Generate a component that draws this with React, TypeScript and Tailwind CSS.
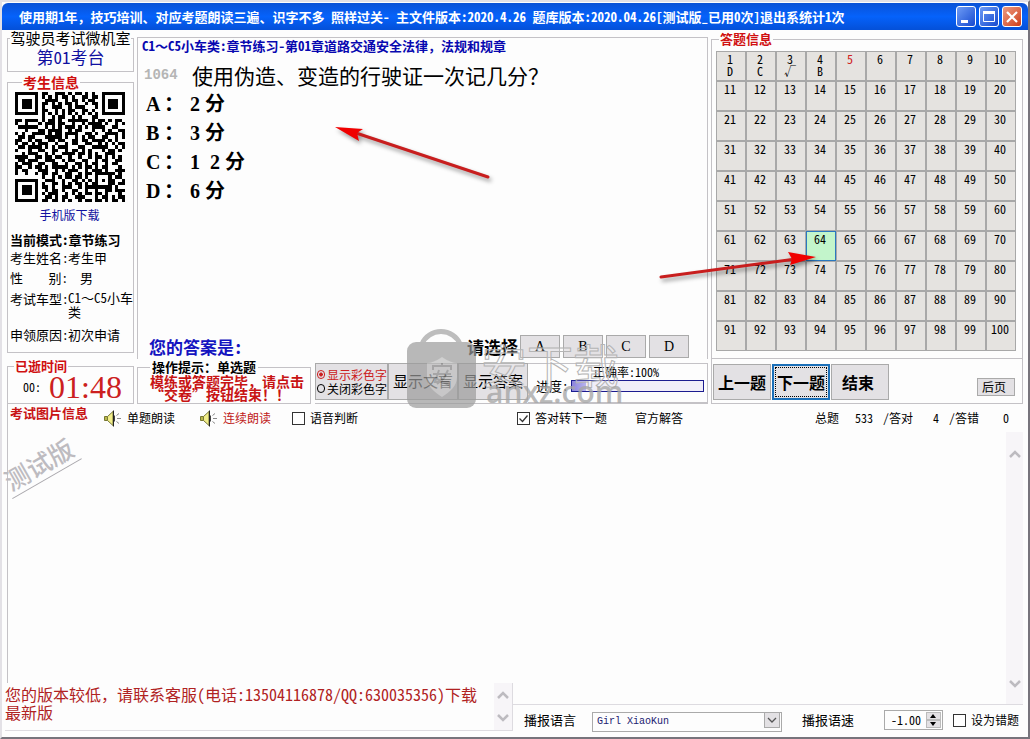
import React, { useState } from 'react';

const qrRows = [
    '#######.##..###.#.##.#.#..#######',
    '#.....#.#.#.#.##.#..##.##.#.....#',
    '#.###.#..####..#.##.#.##..#.###.#',
    '#.###.#.##.#.#.##.#..#.##.#.###.#',
    '#.###.#.#..###..#.###...#.#.###.#',
    '#.....#.##..#.#.##..##.#..#.....#',
    '#######.#.#.#.#.#.#.#.#.#.#######',
    '........#..#.##..#.#...##........',
    '##.####.#.##.#..######.#.##.#.##.',
    '#..#...#.###.##..#..#.####.#..#.#',
    '.######..#.#.#.###.#.#.####..##..',
    '...#...##.####..#.##...#..#.#..##',
    '#.#..####.#.##.####..##.#..####.#',
    '.##.##...#####.#..#.#.##..##..#.#',
    '##..#.##..##.##..##.##.####.#.#..',
    '#.##.#.###..#..#.##..##..#.#.#.##',
    '.##.####.#.#.###...##..#####..#.#',
    '#...#..##..##..#.##.#.#...#.##.#.',
    '..#.###..#.#..####.##.#.#..###...',
    '####..##.##.##..#..#..#.##.#.#.#.',
    '.##.###..###..#.##..##..#.##..##.',
    '#.###..##..##..#..##.#.##..#.##..',
    '##..#.##.#.#####.#.#.##.#.##...#.',
    '#.##...###..#.#.###..#.###.#..###',
    '#..#..#.##.##..##..#.##.######.#.',
    '........#..#.#.##.##.#..#...#.##.',
    '#######..###..#..##.#.#.#.#.##..#',
    '#.....#.#..##.#.#.##.#.##...##.##',
    '#.###.#.##.#..###..#.########.#..',
    '#.###.#..#.##.#..##..#..#..##.###',
    '#.###.#.#.###..#.#.#.##.##.#...#.',
    '#.....#..##.#.##..###...#.##.#.##',
    '#######.##.##.#.#..#.##.##.#.##.#',
];

const answers: Record<number, string> = { 1: 'D', 2: 'C', 3: '√', 4: 'B' };

const options = [
    { key: 'A', text: '2 分' },
    { key: 'B', text: '3 分' },
    { key: 'C', text: '1\u00a0\u00a02 分' },
    { key: 'D', text: '6 分' },
];

function QrCode() {
    return (
        <svg viewBox="0 0 33 33" className="h-[110px] w-[110px]" shapeRendering="crispEdges" role="img" aria-label="手机版下载">
            {qrRows.map((row, y) =>
                row.split('').map((c, x) => (c === '#' ? <rect key={x + '-' + y} x={x} y={y} width="1" height="1" fill="#000" /> : null))
            )}
        </svg>
    );
}

function Speaker() {
    return (
        <svg viewBox="0 0 17 17" className="h-[17px] w-[17px]" aria-hidden="true">
            <path d="M0.5 6.5h3v4h-3z" fill="#b8b84a" stroke="#777733" />
            <path d="M3.5 6.500L9 1.500v14L3.500 10.500z" fill="#f2ee8a" stroke="#77773a" />
            <path d="M9.500 0.500v16" stroke="#222" />
            <path d="M10.500 5.500v6" stroke="#444" />
            <path d="M12.500 5.500l2.500-2M13 8.500h4M12.500 11.500l2.500 2" stroke="#888" />
        </svg>
    );
}

function Chevron({ up }: { up?: boolean }) {
    return (
        <svg viewBox="0 0 12 8" className="h-2 w-3" fill="none" aria-hidden="true">
            <path d={up ? 'M1 7l5-5 5 5' : 'M1 1l5 5 5-5'} stroke="#bdbbc0" strokeWidth="2.5" />
        </svg>
    );
}

function TitleBar() {
    const btn = 'flex h-[21px] w-5 items-center justify-center rounded-[3px] border border-white';
    return (
        <header className="flex h-[27px] items-center justify-between rounded-t-md bg-linear-to-b from-[#0a52d6] via-[#0562fb] to-[#0450d8] pr-1.5 pl-[17px]">
            <h1 className="truncate text-[13px] font-bold text-white">
                使用期1年，技巧培训、对应考题朗读三遍、识字不多 照样过关- 主文件版本:2020.4.26 题库版本:2020.04.26[测试版_已用0次]退出系统计1次
            </h1>
            <div className="flex gap-[3px]">
                <button aria-label="最小化" className={btn + ' bg-linear-to-br from-[#6f9bf5] to-[#1647cf]'}>
                    <svg viewBox="0 0 18 18" className="size-[18px]"><path d="M4 12h7v3H4z" fill="#fff" /></svg>
                </button>
                <button aria-label="最大化" className={btn + ' bg-linear-to-br from-[#6f9bf5] to-[#1647cf]'}>
                    <svg viewBox="0 0 18 18" className="size-[18px]"><path d="M3.500 4.500h11v9h-11z" fill="none" stroke="#fff" /><path d="M3 3h12v3H3z" fill="#fff" /></svg>
                </button>
                <button aria-label="关闭" className={btn + ' bg-linear-to-br from-[#ee9a80] to-[#cc3a10]'}>
                    <svg viewBox="0 0 18 18" className="size-[18px]"><path d="M4 4l10 10M14 4L4 14" stroke="#fff" strokeWidth="2.2" /></svg>
                </button>
            </div>
        </header>
    );
}

function Sidebar() {
    return (
        <aside className="flex w-[127px] shrink-0 flex-col">
            <fieldset className="h-[42px] min-w-0 border border-[#c4c2c6] text-center">
                <legend className="mx-auto text-[15px] leading-4 whitespace-nowrap">驾驶员考试微机室</legend>
                <p className="text-[17px] leading-[22px] font-medium text-[#1010a0]">第01考台</p>
            </fieldset>

            <fieldset className="mt-0.5 h-[279px] min-w-0 border border-[#c4c2c6] text-[13px] leading-4 whitespace-nowrap">
                <legend className="ml-3.5 px-px text-[14px] leading-4 font-bold text-[#d01010]">考生信息</legend>
                <div className="flex flex-col items-center pt-0.5 pr-0.5">
                    <QrCode />
                    <a href="#" className="mt-[5px] text-[12px] text-[#1010a0]">手机版下载</a>
                </div>
                <p className="mt-[9px] pl-0.5 text-[13px] font-bold">当前模式:章节练习</p>
                <dl className="grid grid-cols-[58px_1fr] pl-0.5">
                    <dt className="mt-0.5">考生姓名:</dt>
                    <dd className="mt-0.5">考生甲</dd>
                    <dt className="mt-1 flex justify-between"><span>性</span><span>别:</span></dt>
                    <dd className="mt-1 pl-3">男</dd>
                    <dt className="mt-[5px]">考试车型:</dt>
                    <dd className="mt-[5px] leading-[14px]">C1～C5小车<br />类</dd>
                    <dt className="mt-2">申领原因:</dt>
                    <dd className="mt-2">初次申请</dd>
                </dl>
            </fieldset>

            <fieldset className="mt-[5px] h-[46px] min-w-0 border border-[#c4c2c6]">
                <legend className="ml-1.5 px-px text-[13px] leading-4 font-bold text-[#d01010]">已逝时间</legend>
                <div className="flex items-center justify-center gap-2 pl-1 leading-[26px]">
                    <span className="text-[12px]">00:</span>
                    <span className="font-['Liberation_Serif',serif] text-[32px] text-[#cc2020]">01:48</span>
                </div>
            </fieldset>
        </aside>
    );
}

function QuestionPanel() {
    return (
        <section className="mt-[7px] flex flex-1 flex-col border border-b-0 border-[#c4c2c6]">
            <h2 className="pl-1 text-[13px] leading-4 font-bold text-[#0808b0]">C1～C5小车类:章节练习-第01章道路交通安全法律，法规和规章</h2>
            <div className="mt-2 flex items-center pl-1.5 leading-[26px]">
                <span className="w-12 font-['Liberation_Mono',monospace] text-[14px] font-bold text-[#b5b5b5]">1064</span>
                <p className="text-[21px] font-medium">使用伪造、变造的行驶证一次记几分？</p>
            </div>
            <ul className="mt-0.5 pl-2 font-['Liberation_Serif','Noto_Sans_CJK_SC',serif] text-[20px] leading-[29px]">
                {options.map((o) => (
                    <li key={o.key} className="flex">
                        <span className="w-[18px] font-bold">{o.key}</span>
                        <span className="w-[26px] font-bold">：</span>
                        <span className="font-semibold">{o.text}</span>
                    </li>
                ))}
            </ul>
            <div className="mt-auto flex h-[25px] items-center pr-[18px] pl-[11px]">
                <p className="text-[17px] font-bold text-[#1414c0]">您的答案是:</p>
                <span className="mr-0.5 ml-auto text-[17px] font-bold">请选择</span>
                <div className="flex gap-[3px]">
                    {options.map((o) => (
                        <button key={o.key} className="h-[23px] w-10 border border-[#aaa] bg-[#e3e1e4] font-['Liberation_Serif',serif] text-[14px] leading-5">
                            {o.key}
                        </button>
                    ))}
                </div>
            </div>
        </section>
    );
}

function ControlRow() {
    const [color, setColor] = useState('on');
    const radio = "size-[9px] appearance-none rounded-full border border-current checked:bg-[radial-gradient(currentColor_1.5px,transparent_2px)]";
    return (
        <section className="flex h-[45px]">
            <fieldset className="h-[45px] w-[174px] min-w-0 border border-[#c4c2c6]">
                <legend className="ml-3 px-0.5 text-[13px] leading-4 font-bold">操作提示：单选题</legend>
                <p className="pl-3 text-[14px] leading-[13px] font-bold whitespace-nowrap text-[#c81414]">
                    模练或答题完毕，请点击
                    <br />
                    “交卷”按钮结束！！
                </p>
            </fieldset>
            <div className="mt-1 ml-1 flex min-w-0 flex-1 border-b border-[#c4c2c6]">
                <div className="flex h-[37px] w-[73px] flex-col justify-center border border-[#aaa] bg-[#e3e1e4] text-[12px] leading-[14px] whitespace-nowrap">
                    <label className="flex items-center gap-0.5 pl-px text-[#cc2020]">
                        <input type="radio" name="color" className={radio} checked={color === 'on'} onChange={() => setColor('on')} />
                        显示彩色字
                    </label>
                    <label className="flex items-center gap-0.5 pl-px">
                        <input type="radio" name="color" className={radio} checked={color === 'off'} onChange={() => setColor('off')} />
                        关闭彩色字
                    </label>
                </div>
                <button className="h-[37px] w-[70px] border border-[#aaa] bg-[#e3e1e4] text-[15px] whitespace-nowrap">显示文盲</button>
                <button className="h-[37px] w-[70px] border border-[#aaa] bg-[#e3e1e4] text-[15px] whitespace-nowrap">显示答案</button>
                <div className="flex-1 border border-l-0 border-[#c4c2c6] pr-[3px] pl-2">
                    <p className="pl-3 text-center text-[12px] leading-4">正确率:100%</p>
                    <div className="flex items-center gap-0.5 text-[13px] leading-3">
                        <span className="whitespace-nowrap">进度:</span>
                        <div className="h-3 flex-1 border border-[#1c1c90] bg-[#f0edf8]">
                            <div className="h-full w-[11%] bg-linear-to-r from-[#8c84dc] to-[#b9b4ee]" />
                        </div>
                    </div>
                </div>
            </div>
        </section>
    );
}

function AnswerPanel() {
    const nums = Array.from({ length: 100 }, (_, i) => i + 1);
    const nav = 'h-9 w-[58px] text-[16px] font-bold whitespace-nowrap';
    return (
        <section className="flex w-[312px] shrink-0 flex-col pt-px">
            <fieldset className="h-[328px] min-w-0 border border-[#c4c2c6] pt-1 pr-1.5 pl-1">
                <legend className="ml-[3px] px-px text-[13px] leading-4 font-bold text-[#d01010]">答题信息</legend>
                <div className="grid grid-cols-10">
                    {nums.map((n) => (
                        <button
                            key={n}
                            className={
                                'flex h-[30px] flex-col items-center border pt-px pr-0.5 text-[12px] leading-3 ' +
                                (n === 64 ? 'border-[#2a78c0] bg-[#c3f5cb]' : 'border-[#a8a8a8] bg-[#e5e3e0]') +
                                (n === 5 ? ' text-[#d02020]' : '')
                            }
                        >
                            <span>{n}</span>
                            {answers[n] && <span>{answers[n]}</span>}
                        </button>
                    ))}
                </div>
            </fieldset>
            <div className="flex h-[45px] items-start gap-px border border-t-0 border-[#c4c2c6] px-px pt-[5px]">
                <button className={nav + ' border border-[#aaa] bg-[#e3e1e4]'}>上一题</button>
                <button className={nav + ' border-2 border-[#1a6fb8] bg-[#e3e1e4] outline-1 -outline-offset-4 outline-dotted outline-black'}>下一题</button>
                <button className={nav + ' border border-[#aaa] bg-[#e3e1e4] pr-1'}>结束</button>
                <button className="mt-3.5 mr-1.5 ml-auto h-[18px] w-[38px] border border-[#aaa] bg-[#e3e1e4] pr-1 text-[12px] leading-3">后页</button>
            </div>
        </section>
    );
}

function CheckBox({ label, checked }: { label: string; checked?: boolean }) {
    const [on, setOn] = useState(!!checked);
    return (
        <label className="flex items-center gap-[5px] whitespace-nowrap">
            <span className="relative flex">
                <input type="checkbox" checked={on} onChange={() => setOn(!on)} className="size-[13px] appearance-none border border-[#333] bg-white" />
                {on && (
                    <svg viewBox="0 0 13 13" className="pointer-events-none absolute inset-0 size-[13px]" fill="none">
                        <path d="M2.500 6.500l3 3 5-6" stroke="#333" strokeWidth="1.3" />
                    </svg>
                )}
            </span>
            {label}
        </label>
    );
}

function Toolbar() {
    return (
        <section className="flex h-[28px] items-center border-l border-[#c4c2c6] pr-3.5 text-[12px] whitespace-nowrap">
            <h2 className="self-start pl-0.5 text-[13px] leading-[18px] font-bold text-[#c81414]">考试图片信息</h2>
            <div className="grid flex-1 grid-cols-[96px_92px_225px_118px_1fr] items-center pl-4">
                <button className="flex items-center gap-1.5"><Speaker />单题朗读</button>
                <button className="flex items-center gap-1.5 text-[#c02020]"><Speaker />连续朗读</button>
                <CheckBox label="语音判断" />
                <CheckBox label="答对转下一题" checked />
                <div className="flex justify-between">
                    <button>官方解答</button>
                    <p className="flex">
                        <span className="w-10">总题</span>
                        <span className="w-7">533</span>
                        <span className="w-[50px]">/答对</span>
                        <span className="w-4">4</span>
                        <span className="w-[54px]">/答错</span>
                        <span>0</span>
                    </p>
                </div>
            </div>
        </section>
    );
}

function BottomArea() {
    return (
        <section className="flex flex-1 text-[12px]">
            <div className="flex w-[506px] shrink-0 flex-col">
                <div className="flex-1 border-l border-[#c4c2c6]">
                    <p className="mt-5 -ml-2 w-20 -rotate-30 border-b border-[#a9a7ac] text-center font-['Liberation_Serif','Noto_Sans_CJK_SC',serif] text-[25px] leading-7 font-medium text-[#bdbbc0]">
                        测试版
                    </p>
                </div>
                <div className="-ml-0.5 flex h-[48px] border-r border-b border-[#dddbe0]">
                    <p className="flex-1 pt-0.5 pr-4 text-[16px] leading-[18px] text-[#b02222]">
                        您的版本较低，请联系客服(电话:13504116878/QQ:630035356)下载最新版
                    </p>
                    <div className="flex w-[18px] flex-col items-center justify-between bg-[#f7f5f8] py-2">
                        <Chevron up />
                        <Chevron />
                    </div>
                </div>
                <div className="h-1.5" />
            </div>
            <div className="flex flex-1 flex-col">
                <div className="flex flex-1 justify-end border-b border-[#dddbe0]">
                    <div className="flex w-[17px] flex-col items-center justify-between bg-[#f7f5f8] pt-[18px] pb-4">
                        <Chevron up />
                        <Chevron />
                    </div>
                </div>
                <div className="flex h-8 items-center pr-1 pb-0.5 pl-[11px] whitespace-nowrap">
                    <label htmlFor="voice" className="text-[13px]">播报语言</label>
                    <div className="relative ml-4 h-5 w-[190px]">
                        <select id="voice" className="h-5 w-full appearance-none border border-[#aaa] pl-1 font-['Liberation_Mono',monospace] text-[10px] leading-[18px] text-[#1a1a70]">
                            <option>Girl XiaoKun</option>
                        </select>
                        <span className="pointer-events-none absolute top-0.5 right-0.5 flex h-4 w-4 items-center justify-center border border-[#aaa] bg-[#e3e1e4]">
                            <svg viewBox="0 0 10 6" className="h-1.5 w-2.5" fill="none"><path d="M1 1l4 4 4-4" stroke="#555" strokeWidth="1.3" /></svg>
                        </span>
                    </div>
                    <label htmlFor="speed" className="ml-5 text-[13px]">播报语速</label>
                    <div className="mr-2.5 ml-auto flex h-5 w-[59px] items-center border border-[#aaa] pr-px">
                        <input id="speed" defaultValue="-1.00" className="w-0 flex-1 pl-1.5 text-[12px]" />
                        <div className="flex w-[15px] flex-col bg-[#e3e1e4]">
                            <button aria-label="加快" className="flex h-2 items-center justify-center border border-[#bbb]">
                                <svg viewBox="0 0 6 4" className="h-1 w-1.5"><path d="M3 0l3 4H0z" /></svg>
                            </button>
                            <button aria-label="减慢" className="flex h-2 items-center justify-center border border-[#bbb]">
                                <svg viewBox="0 0 6 4" className="h-1 w-1.5"><path d="M3 4l3-4H0z" /></svg>
                            </button>
                        </div>
                    </div>
                    <CheckBox label="设为错题" />
                </div>
            </div>
        </section>
    );
}

function Overlays() {
    return (
        <div className="pointer-events-none" aria-hidden="true">
            {/* red pointers */}
            <svg viewBox="0 0 164 64" className="absolute top-[120px] left-[329px] h-16 w-[164px] drop-shadow-[2px_3px_2px_rgba(0,0,0,0.4)]">
                <path d="M22 10L157 55" stroke="#c81e1e" strokeWidth="3" strokeLinecap="round" />
                <path d="M4 5l28 2-6 4 2 8z" fill="#f00000" />
            </svg>
            <svg viewBox="0 0 164 40" className="absolute top-[244px] left-[654px] h-10 w-[164px] drop-shadow-[2px_3px_2px_rgba(0,0,0,0.4)]">
                <path d="M5 31L140 13" stroke="#c81e1e" strokeWidth="3" strokeLinecap="round" />
                <path d="M160 11l-28-5 4 7-2 6z" fill="#f00000" />
            </svg>

            {/* site watermark */}
            <svg viewBox="0 0 72 82" className="absolute top-[324px] left-[403px] h-[82px] w-[72px] opacity-70">
                <path d="M17 18a20 18 0 0 1 38 0" fill="none" stroke="#a2a2a2" strokeWidth="5" />
                <rect x="2" y="16" width="69" height="66" rx="9" fill="#9c9c9c" />
                <path d="M37 31c6 4 11 6 15 6v14c0 9-7 15-15 20-8-5-15-11-15-20V37c4 0 9-2 15-6z" fill="#bdbdbd" />
                <path d="M28 44v-4h18v4M37 37v3M28 48h18M34 44l-4 12h14M43 44l-4 8-7 6M32 53l12 6" fill="none" stroke="#8d8d8d" strokeWidth="2" />
            </svg>
            <span className="absolute top-[338px] left-[479px] text-[46px] leading-[46px] font-medium text-white/20 [-webkit-text-stroke:1px_#b4b4b4]">安下载</span>
            <span className="absolute top-[372px] left-[484px] font-['Open_Sans',sans-serif] text-[30px] leading-9 font-semibold text-[#a6a6a6]/80">anxz.com</span>
        </div>
    );
}

export default function App() {
    return (
        <div className="relative flex min-h-screen flex-col border-2 border-t-[#e3e1e6] border-r-[#77747c] border-b-[#77747c] border-l-[#e3e1e6] bg-[#fdfdfd] pt-px font-['Noto_Sans_Mono_CJK_SC','Noto_Sans_CJK_SC',sans-serif] text-black">
            <TitleBar />
            <div className="flex flex-1 flex-col px-[5px]">
                <main className="flex h-[374px] gap-[3px]">
                    <Sidebar />
                    <div className="flex min-w-0 flex-1 flex-col">
                        <QuestionPanel />
                        <ControlRow />
                    </div>
                    <AnswerPanel />
                </main>
                <Toolbar />
                <BottomArea />
            </div>
            <Overlays />
        </div>
    );
}
